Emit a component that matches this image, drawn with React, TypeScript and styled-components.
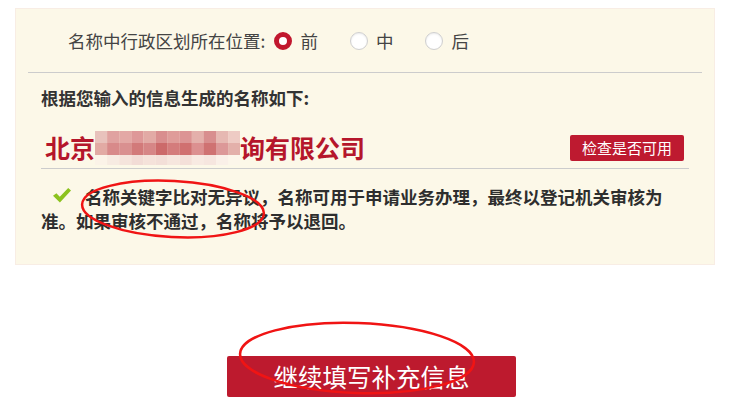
import React from 'react'
import styled, { createGlobalStyle } from 'styled-components'

const GlobalStyle = createGlobalStyle`
  body {
    margin: 0;
    background: #ffffff;
    font-family: "Noto Sans CJK SC", "Noto Sans", sans-serif;
    color: #333333;
  }
`

const POSITIONS = ['前', '中', '后']

// pixel mosaic over the hidden part of the company name
const MOSAIC = [
  ['#e8c2bc', '#e0a2a0', '#e3a8a5', '#de9898', '#e2aaa5', '#d98e8e', '#df9c99', '#dc9494', '#e4b0ab', '#d88e8e', '#e6b8b2', '#eecbc4'],
  ['#e2aaa4', '#d88a8a', '#d99090', '#d27a7a', '#d68686', '#cc6a6a', '#d47c7c', '#d07070', '#dc9090', '#cf7272', '#dc9898', '#e3b0aa'],
  ['#fbf3e8', '#f7ebe2', '#f5e4dc', '#f2dcd6', '#f5e2da', '#f3dfd8', '#f6e6de', '#f4e0d9', '#f8eae2', '#f6e6df', '#faf0e8', '#fcf6ea'],
]

function Mosaic() {
  return (
    <MosaicBox width="145" height="36" viewBox="0 0 145 36">
      {MOSAIC.map((row, r) =>
        row.map((c, i) => (
          <rect key={`${r}-${i}`} x={i * 12.1} y={r * 12} width="12.2" height={r === 2 ? 10 : 12} fill={c} />
        ))
      )}
    </MosaicBox>
  )
}

function CheckMark() {
  return (
    <CheckIcon width="18" height="15" viewBox="0 0 18 15">
      <path d="M0 7.8 L3.4 5.2 L6.8 8.8 L15.2 0 L18 2.6 L6.9 14.5 Z" fill="#8cc21e" />
    </CheckIcon>
  )
}

export default function App() {
  return (
    <Page>
      <GlobalStyle />
      <Panel>
        <PositionRow>
          <Label>名称中行政区划所在位置:</Label>
          {POSITIONS.map((p, i) => (
            <Option key={p}>
              <Radio $checked={i === 0} />
              {p}
            </Option>
          ))}
        </PositionRow>
        <Divider />
        <Body>
          <Title>根据您输入的信息生成的名称如下:</Title>
          <NameRow>
            <CompanyName>
              北京<Mosaic />询有限公司
            </CompanyName>
            <SmallButton>检查是否可用</SmallButton>
          </NameRow>
          <Message>
            <CheckMark />
            名称关键字比对无异议，名称可用于申请业务办理，最终以登记机关审核为准。如果审核不通过，名称将予以退回。
          </Message>
        </Body>
      </Panel>
      <ButtonRow>
        <BigButton>继续填写补充信息</BigButton>
      </ButtonRow>

      <Annotations width="737" height="414" viewBox="0 0 737 414">
        <ellipse cx="173" cy="209" rx="91" ry="28" fill="none" stroke="#f01414" strokeWidth="2.5" transform="rotate(3 173 209)" />
        <ellipse cx="357" cy="358" rx="117" ry="35" fill="none" stroke="#f01414" strokeWidth="2.5" transform="rotate(2 357 358)" />
      </Annotations>
    </Page>
  )
}

const Page = styled.div`
  position: relative;
  width: 737px;
  height: 414px;
  padding: 8px 22px 0 15px;
  box-sizing: border-box;
  overflow: hidden;
`

const Panel = styled.div`
  width: 700px;
  background: #fcf8e8;
  border: 1px solid #f8ede4;
  box-sizing: border-box;
  padding-bottom: 31px;
`

const PositionRow = styled.div`
  display: flex;
  align-items: center;
  height: 63px;
  padding-left: 52px;
  font-size: 17.5px;
  color: #444444;
`

const Label = styled.span`
  margin-right: 9px;
`

const Option = styled.label`
  display: flex;
  align-items: center;
  gap: 8px;
  margin-right: 32px;
`

const Radio = styled.span<{ $checked?: boolean }>`
  display: inline-block;
  width: 18px;
  height: 18px;
  border-radius: 50%;
  box-sizing: border-box;
  background: #ffffff;
  border: ${({ $checked }) => ($checked ? '5.5px solid #c1172e' : '1px solid #cfcfcf')};
  box-shadow: ${({ $checked }) => ($checked ? 'none' : 'inset 0 1px 2px rgba(0,0,0,0.08)')};
`

const Divider = styled.div`
  height: 1px;
  margin: 0 12px;
  background: #cccccc;
`

const Body = styled.div`
  padding: 0 25px;
`

const Title = styled.div`
  margin-top: 13px;
  font-size: 17.5px;
  font-weight: 700;
  line-height: 24px;
  color: #333333;
`

const NameRow = styled.div`
  display: flex;
  align-items: center;
  justify-content: space-between;
  margin-top: 16px;
  height: 42px;
  border-bottom: 1px solid #cccccc;
  padding-right: 5px;
`

const CompanyName = styled.div`
  display: flex;
  align-items: center;
  font-size: 25px;
  font-weight: 700;
  color: #b5162b;
  padding-left: 4px;
  line-height: 30px;
`

const MosaicBox = styled.svg`
  display: block;
  margin-top: 4px;
`

const SmallButton = styled.button`
  width: 114px;
  height: 26px;
  padding: 0;
  border: none;
  border-radius: 2px;
  background: #be1a30;
  color: #ffffff;
  font-family: "Noto Sans CJK SC", sans-serif;
  font-size: 15px;
  line-height: 26px;
  margin-top: 2px;
`

const Message = styled.p`
  margin: 16px 0 0;
  font-size: 17.5px;
  font-weight: 700;
  line-height: 24px;
  color: #2e2e2e;
`

const CheckIcon = styled.svg`
  display: inline-block;
  vertical-align: 1px;
  margin: 0 14px 0 12px;
`

const ButtonRow = styled.div`
  display: flex;
  padding-left: 212px;
  margin-top: 91px;
`

const BigButton = styled.button`
  width: 289px;
  height: 41px;
  padding: 0;
  border: none;
  border-radius: 2px;
  background: #bd1a2e;
  color: #ffffff;
  font-family: "Noto Sans CJK SC", sans-serif;
  font-size: 24.5px;
  line-height: 41px;
`

const Annotations = styled.svg`
  position: absolute;
  left: 0;
  top: 0;
  pointer-events: none;
`
